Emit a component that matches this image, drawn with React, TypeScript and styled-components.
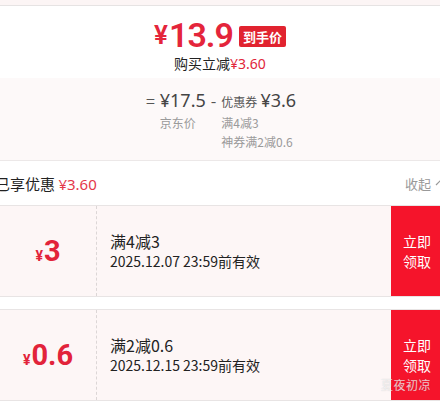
import React from "react";
import styled, { createGlobalStyle } from "styled-components";

const GlobalStyle = createGlobalStyle`
  html, body { margin: 0; padding: 0; background: #ffffff; }
  body { font-family: "Noto Sans CJK SC", "Noto Sans", sans-serif; color: #333; }
  * { box-sizing: border-box; }
`;

const Page = styled.div`
  position: relative;
  width: 440px;
  height: 402px;
  overflow: hidden;
  background: #fff;
`;

const TopStrip = styled.div`
  height: 6px;
  background: #fcf5f5;
  border-bottom: 1px solid #e6e3e3;
`;

const PriceCard = styled.div`
  height: 72px;
  padding-top: 11px;
  display: flex;
  flex-direction: column;
  align-items: center;
  background: #fff;
`;

const PriceLine = styled.div`
  height: 36px;
  display: flex;
  align-items: center;
  color: #e4253b;
`;

const Yen = styled.span<{ $size: number }>`
  font-family: Roboto, "Noto Sans", sans-serif;
  font-size: ${(p) => p.$size}px;
  font-weight: 600;
  line-height: 1;
  margin-right: 1px;
`;

const BigNum = styled.span`
  font-family: Roboto, "Noto Sans", sans-serif;
  font-size: 34px;
  font-weight: 600;
  letter-spacing: -1px;
  line-height: 1;
`;

const Tag = styled.span`
  margin-left: 6px;
  margin-top: 2px;
  height: 21px;
  padding: 0 4px;
  background: #e1232f;
  color: #fff;
  font-size: 13px;
  font-weight: 700;
  line-height: 21px;
  border-radius: 2px;
`;

const SubLine = styled.div`
  margin-top: 2px;
  font-size: 14px;
  line-height: 16px;
  color: #222;
`;

const Red = styled.span<{ $light?: boolean }>`
  color: ${(p) => (p.$light ? "#e4394a" : "#e1253a")};
  font-family: "Noto Sans", "Noto Sans CJK SC", sans-serif;
`;

const CalcSection = styled.div`
  background: #fdf9f9;
  border-bottom: 1px solid #ece8e8;
  padding: 9px 0 9px;
  display: flex;
  justify-content: center;
`;

const CalcGrid = styled.div`
  display: grid;
  grid-template-columns: auto auto auto auto;
  column-gap: 5px;
  align-items: center;
  margin-left: 2px;
`;

const Op = styled.span`
  font-size: 16px;
  color: #555;
  line-height: 26px;
`;

const Amount = styled.span`
  font-family: "Noto Sans", "Noto Sans CJK SC", sans-serif;
  font-size: 18px;
  color: #444;
  line-height: 26px;
`;

const Label = styled.span`
  font-size: 12px;
  color: #555;
  margin-right: 3px;
`;

const Note = styled.span<{ $col: number }>`
  grid-column: ${(p) => p.$col};
  font-size: 12px;
  color: #9a9a9a;
  line-height: 19px;
`;

const SummaryRow = styled.div`
  height: 44px;
  display: flex;
  align-items: center;
  justify-content: space-between;
  background: #fff;
`;

const SummaryText = styled.span`
  margin-left: -5px;
  font-size: 15px;
  color: #222;
`;

const Collapse = styled.span`
  display: flex;
  align-items: center;
  gap: 3px;
  margin-right: -6px;
  font-size: 13px;
  color: #999;
`;

const Coupon = styled.div`
  height: 92px;
  display: grid;
  grid-template-columns: 97px 1fr 49px;
  border-top: 1px solid #e8e4e4;
  border-bottom: 1px solid #e8e4e4;
  background: #fdf6f6;
  & + & {
    margin-top: 12px;
  }
`;

const CouponValue = styled.div`
  display: flex;
  align-items: baseline;
  justify-content: center;
  padding-top: 30px;
  color: #e2233a;
  font-family: Roboto, "Noto Sans", sans-serif;
  font-weight: 700;
  border-right: 1px dashed #dcd6d6;
`;

const CouponYen = styled.span`
  font-size: 14px;
  margin-right: 1px;
`;

const CouponNum = styled.span`
  font-size: 29px;
  line-height: 30px;
`;

const CouponInfo = styled.div`
  display: flex;
  flex-direction: column;
  justify-content: center;
  padding-left: 13px;
  gap: 1px;
`;

const CouponTitle = styled.div`
  font-size: 16px;
  line-height: 20px;
  color: #222;
`;

const CouponDate = styled.div`
  font-size: 14px;
  line-height: 19px;
  color: #222;
`;

const GrabButton = styled.div`
  background: #f5142b;
  color: #fff;
  display: flex;
  flex-direction: column;
  align-items: center;
  justify-content: center;
  padding-left: 3px;
  font-size: 14px;
  line-height: 20px;
`;

const Watermark = styled.div`
  position: absolute;
  right: 9px;
  bottom: 9px;
  font-size: 12px;
  color: rgba(255, 255, 255, 0.72);
  text-shadow: 0 0 1px rgba(120, 120, 120, 0.4);
  letter-spacing: 0.5px;
`;

const ChevronUp = () => (
  <svg width="12" height="12" viewBox="0 0 12 12" fill="none">
    <path d="M2 8 L6 4 L10 8" stroke="#999" strokeWidth="1.2" />
  </svg>
);

const coupons = [
  { value: "3", title: "满4减3", date: "2025.12.07 23:59前有效" },
  { value: "0.6", title: "满2减0.6", date: "2025.12.15 23:59前有效" },
];

export default function App() {
  return (
    <>
      <GlobalStyle />
      <Page>
        <TopStrip />
        <PriceCard>
          <PriceLine>
            <Yen $size={26}>¥</Yen>
            <BigNum>13.9</BigNum>
            <Tag>到手价</Tag>
          </PriceLine>
          <SubLine>
            购买立减<Red>¥3.60</Red>
          </SubLine>
        </PriceCard>
        <CalcSection>
          <CalcGrid>
            <Op>=</Op>
            <Amount>¥17.5</Amount>
            <Op>-</Op>
            <span>
              <Label>优惠券</Label>
              <Amount>¥3.6</Amount>
            </span>
            <Note $col={2}>京东价</Note>
            <Note $col={4}>满4减3</Note>
            <Note $col={4}>神券满2减0.6</Note>
          </CalcGrid>
        </CalcSection>
        <SummaryRow>
          <SummaryText>
            已享优惠 <Red $light>¥3.60</Red>
          </SummaryText>
          <Collapse>
            收起
            <ChevronUp />
          </Collapse>
        </SummaryRow>
        {coupons.map((c) => (
          <Coupon key={c.value}>
            <CouponValue>
              <CouponYen>¥</CouponYen>
              <CouponNum>{c.value}</CouponNum>
            </CouponValue>
            <CouponInfo>
              <CouponTitle>{c.title}</CouponTitle>
              <CouponDate>{c.date}</CouponDate>
            </CouponInfo>
            <GrabButton>
              <span>立即</span>
              <span>领取</span>
            </GrabButton>
          </Coupon>
        ))}
        <Watermark>夏夜初凉</Watermark>
      </Page>
    </>
  );
}
